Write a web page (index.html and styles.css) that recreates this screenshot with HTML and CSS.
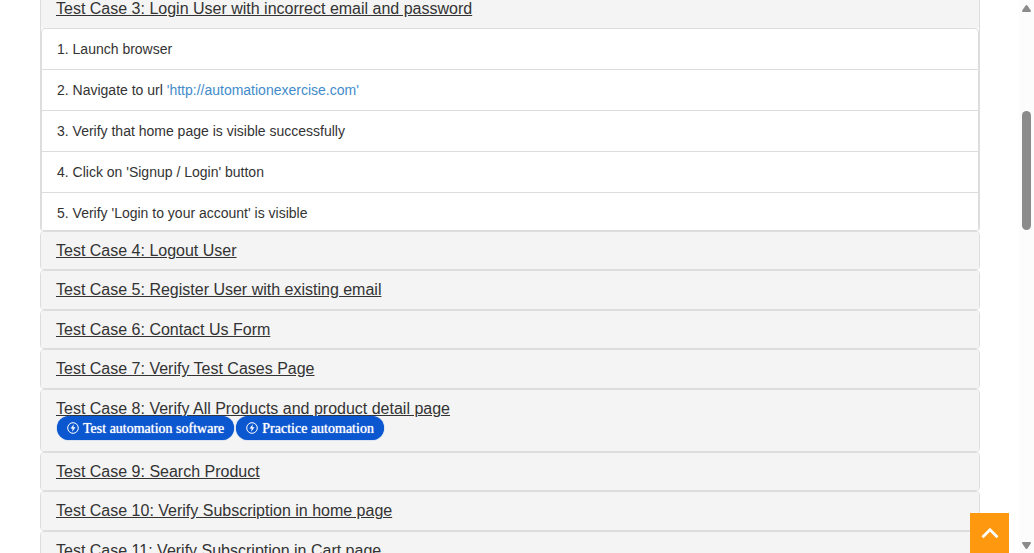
FILE: index.html
```
<!DOCTYPE html>
<html lang="en">
<head>
<meta charset="utf-8">
<meta name="viewport" content="width=device-width, initial-scale=1">
<title>Test Cases</title>
<link rel="stylesheet" href="styles.css">
</head>
<body>
<div class="page">
  <main class="content">
    <section class="panel panel-open">
      <h4 class="panel-heading"><a href="#case3">Test Case 3: Login User with incorrect email and password</a></h4>
      <ul class="steps" id="case3">
        <li>1. Launch browser</li>
        <li>2. Navigate to url <a href="#url">'http://automationexercise.com'</a></li>
        <li>3. Verify that home page is visible successfully</li>
        <li>4. Click on 'Signup / Login' button</li>
        <li>5. Verify 'Login to your account' is visible</li>
      </ul>
    </section>
    <section class="panel"><h4 class="panel-heading"><a href="#case4">Test Case 4: Logout User</a></h4></section>
    <section class="panel"><h4 class="panel-heading"><a href="#case5">Test Case 5: Register User with existing email</a></h4></section>
    <section class="panel"><h4 class="panel-heading"><a href="#case6">Test Case 6: Contact Us Form</a></h4></section>
    <section class="panel"><h4 class="panel-heading"><a href="#case7">Test Case 7: Verify Test Cases Page</a></h4></section>
    <section class="panel">
      <div class="panel-heading">
        <h4 class="title"><a href="#case8">Test Case 8: Verify All Products and product detail page</a></h4>
        <div class="pills">
          <a class="pill" href="#software"><svg viewBox="0 0 12 12" aria-hidden="true"><circle cx="6" cy="6" r="5.3" fill="none" stroke="currentColor"/><path d="M6.8 2.3 3.5 6.6h2.1l-.5 3.1 3.4-4.4H6.3z" fill="currentColor"/></svg>Test automation software</a>
          <a class="pill" href="#practice"><svg viewBox="0 0 12 12" aria-hidden="true"><circle cx="6" cy="6" r="5.3" fill="none" stroke="currentColor"/><path d="M6.8 2.3 3.5 6.6h2.1l-.5 3.1 3.4-4.4H6.3z" fill="currentColor"/></svg>Practice automation</a>
        </div>
      </div>
    </section>
    <section class="panel"><h4 class="panel-heading"><a href="#case9">Test Case 9: Search Product</a></h4></section>
    <section class="panel"><h4 class="panel-heading"><a href="#case10">Test Case 10: Verify Subscription in home page</a></h4></section>
    <section class="panel"><h4 class="panel-heading"><a href="#case11">Test Case 11: Verify Subscription in Cart page</a></h4></section>
  </main>
  <div class="scrollbar" aria-hidden="true">
    <svg class="arrow" viewBox="0 0 9 7"><path d="M4.5 0Q5 0 5.4.6L8.8 5.5Q9.3 7 8 7H1Q-.3 7 .2 5.5L3.6.6Q4 0 4.5 0z"/></svg>
    <div class="thumb"></div>
    <svg class="arrow arrow-down" viewBox="0 0 9 7"><path d="M4.5 7Q5 7 5.4 6.4L8.8 1.5Q9.3 0 8 0H1Q-.3 0 .2 1.5L3.6 6.4Q4 7 4.5 7z"/></svg>
  </div>
</div>
<a class="to-top" href="#top" aria-label="Scroll to top"><svg viewBox="0 0 18 12" aria-hidden="true"><path d="M1.5 10.2 9 2.7l7.5 7.5" fill="none" stroke="currentColor" stroke-width="2.7"/></svg></a>
</body>
</html>
```
FILE: styles.css
```
* { box-sizing: border-box; }

body {
  margin: 0;
  background: #fff;
  color: #333;
  font: 14px/20px "Liberation Sans", Arial, sans-serif;
}

.page {
  display: flex;
  height: 100vh;
  overflow: hidden;
}

.content {
  flex: 1;
  min-width: 0;
  padding: 0 39px 0 40px;
}

.panel {
  border: 1px solid #ddd;
  border-radius: 4px;
  background: #fff;
}

.panel-heading {
  margin: 0;
  padding: 10px 15px;
  border-radius: 3px;
  background: #f4f4f4;
  font-size: 16px;
  font-weight: 400;
  line-height: 1.1;
}

.panel-heading a { color: #333; }

.title {
  margin: 0;
  font: inherit;
}

.panel-open {
  border-top: 0;
  border-radius: 0 0 4px 4px;
}

.panel-open .panel-heading {
  padding-top: 0;
  border-radius: 0;
}

.steps {
  max-height: 202px;
  margin: 0;
  padding: 0;
  overflow: hidden;
  list-style: none;
}

.steps li {
  padding: 10px 15px;
  border: 1px solid #ddd;
  background: #fff;
}

.steps li + li { border-top: 0; }
.steps li:first-child { border-radius: 4px 4px 0 0; }

.steps a {
  color: #428bca;
  text-decoration: none;
}

.pills {
  position: relative;
  display: flex;
  gap: 2px;
  margin: -2px 0 1px 1px;
}

.panel-heading .pill {
  display: flex;
  align-items: center;
  gap: 4px;
  height: 24px;
  padding: 1px 10px 0;
  border-radius: 12px;
  background: #0b57d0;
  box-shadow: 0 0 1px #0b57d0;
  color: #fff;
  font: 14px/23px "Liberation Serif", "Times New Roman", serif;
  text-shadow: 0 0 1px #fff;
  text-decoration: none;
  white-space: nowrap;
}

.pill svg {
  width: 12px;
  height: 12px;
}

.scrollbar {
  display: flex;
  flex-direction: column;
  align-items: center;
  width: 15px;
  padding: 5px 0 4px;
  background: #fcfcfc;
}

.arrow {
  width: 9px;
  height: 7px;
  fill: #8b8b8b;
}

.thumb {
  width: 9px;
  height: 119px;
  margin-top: 99px;
  border-radius: 5px;
  background: #8b8b8b;
}

.arrow-down { margin-top: auto; }

.to-top {
  position: fixed;
  right: 25px;
  bottom: 0;
  display: flex;
  align-items: center;
  justify-content: center;
  width: 39px;
  height: 40px;
  background: #fe980f;
  color: #fff;
}

.to-top svg {
  width: 18px;
  height: 12px;
}
```
